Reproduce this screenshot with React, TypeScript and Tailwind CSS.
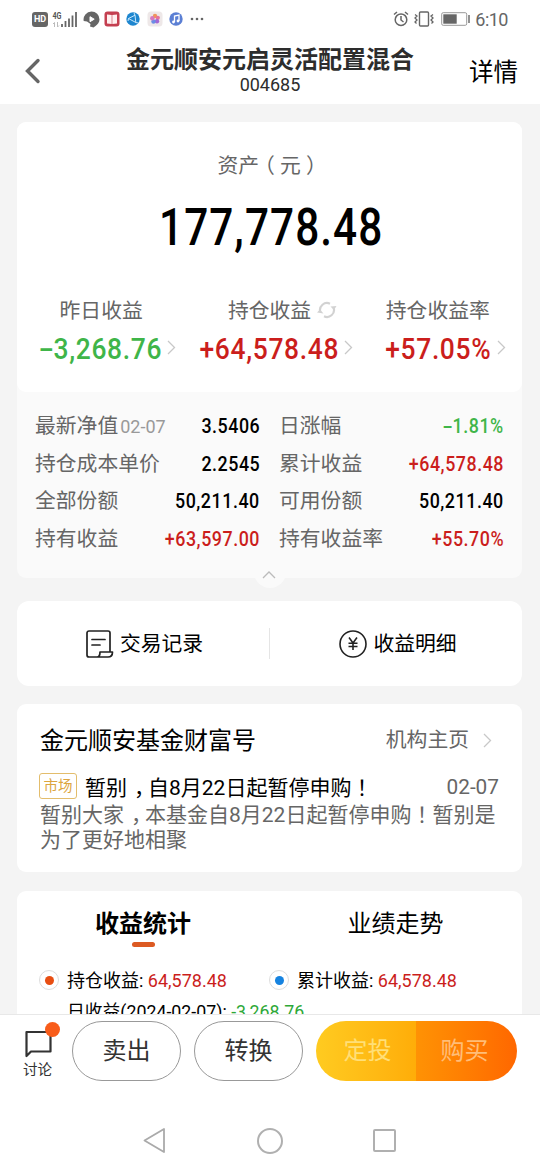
import React from 'react';

// Half-width punctuation centred in a full cell
const Comma: React.FC = () => <span className="ml-[0.33em] mr-[0.17em] [font-feature-settings:'halt']">，</span>;

const Paren: React.FC<{ children: React.ReactNode }> = ({ children }) => (
  <span className="mx-[0.25em] [font-feature-settings:'halt']">{children}</span>
);

const Bang: React.FC = () => <span className="font-['Noto_Sans_CJK_TC',sans-serif]">！</span>;

const Chevron: React.FC<{ className?: string }> = ({ className }) => (
  <svg className={`shrink-0 ${className ?? ''}`} width="9" height="15" viewBox="0 0 9 15" fill="none" stroke="#c8c8c8" strokeWidth="1.3">
    <path d="M1 1l6.500 6.500L1 14" />
  </svg>
);

const tones = {
  up: 'text-[#cb1e1c]',
  down: 'text-[#3fb549]',
  plain: 'text-black',
};

type Tone = keyof typeof tones;

const Amount: React.FC<{ value: string }> = ({ value }) =>
  value.startsWith('-') ? (
    <>
      <span className="inline-block w-[0.5em] text-center scale-x-[1.7]">-</span>
      {value.slice(1)}
    </>
  ) : (
    <>{value}</>
  );

const StatusBar: React.FC = () => (
  <div className="h-[38px] shrink-0 flex items-center justify-between px-8">
    <div className="flex items-center">
      <div className="w-4 h-[15px] rounded-[3px] bg-[#666] text-white text-[9px] font-bold flex items-center justify-center leading-none">HD</div>
      <svg className="ml-1" width="26" height="17" viewBox="0 0 26 17">
        <text x="0.5" y="7.5" fontSize="8.5" fontWeight="700" fill="#555" textLength="9" lengthAdjust="spacingAndGlyphs">4G</text>
        <path d="M2.500 16v-4.500m-1.500 1.500l1.500-1.500M5.500 11v5m1.500-1.500L5.500 16" stroke="#bbb" fill="none" />
        <path d="M10 16v-3M13.500 16v-6M17 16V7.500M20.500 16V4.500M24 16V1" stroke="#666" strokeWidth="1.800" />
      </svg>
      <svg className="ml-[5px]" width="17" height="17" viewBox="0 0 17 17">
        <path d="M8.500 0.500a8 8 0 0 1 8 8c0 3-2 5-4 6.500l-2 1.500-3.500-1 .5-2.500-3.500-2.500-3.300-.5a8 8 0 0 1 7.800-9.500z" fill="#666" />
        <path d="M7 5.700v5l4.200-2.500z" fill="#fff" stroke="#fff" strokeLinejoin="round" />
      </svg>
      <svg className="ml-1" width="16" height="16" viewBox="0 0 16 16">
        <rect x="0.500" y="0.500" width="15" height="15" rx="3" fill="#c43f50" />
        <path d="M3 3.500l4.700.5V13L3 12.500zM13 3.500L8.300 4v9l4.700-.5z" fill="#fff0f0" />
      </svg>
      <svg className="ml-[6px]" width="14" height="14" viewBox="0 0 14 14">
        <circle cx="7" cy="7" r="6.700" fill="#1e86cf" />
        <path d="M2.500 6.500L9 3.200l.8 7.300zM9 3.200L8 1M9.800 10.500L12.500 11M2.500 6.500L2 9" fill="none" stroke="#d9f0ff" strokeWidth="0.900" />
      </svg>
      <svg className="ml-[7px]" width="16" height="16" viewBox="0 0 16 16">
        <rect x="0.500" y="0.500" width="15" height="15" rx="3.500" fill="#eee8e8" />
        <circle cx="8" cy="5" r="2.200" fill="#f0945b" />
        <circle cx="10.800" cy="6.800" r="2.100" fill="#e6739a" />
        <circle cx="10" cy="10.300" r="2.200" fill="#a267d6" />
        <circle cx="6.500" cy="10.500" r="2.200" fill="#6b8ee6" />
        <circle cx="5.300" cy="7.200" r="2.200" fill="#d678c0" />
      </svg>
      <svg className="ml-[6px]" width="14" height="14" viewBox="0 0 14 14">
        <circle cx="7" cy="7" r="6.700" fill="#5b7fd4" />
        <path d="M5.500 10V4l4.500-1v6" fill="none" stroke="#fff" strokeWidth="1.300" />
        <circle cx="4.500" cy="10" r="1.400" fill="#fff" />
        <circle cx="9" cy="9" r="1.400" fill="#fff" />
      </svg>
      <svg className="ml-[7px]" width="14" height="4" viewBox="0 0 14 4" fill="#666">
        <circle cx="2" cy="2" r="1.300" />
        <circle cx="7" cy="2" r="1.300" />
        <circle cx="12" cy="2" r="1.300" />
      </svg>
    </div>
    <div className="flex items-center">
      <svg width="16" height="16" viewBox="0 0 16 16" fill="none" stroke="#666" strokeWidth="1.500">
        <circle cx="8" cy="8.700" r="5.800" />
        <path d="M8 5v4l2.500 2M1 3.500L4 1M15 3.500L12 1" />
      </svg>
      <svg className="ml-[5px]" width="20" height="16" viewBox="0 0 20 16" fill="none" stroke="#666" strokeWidth="1.400">
        <rect x="5.500" y="1" width="9" height="14" rx="1" />
        <path d="M1 3.500l2 1.500-2 2 2 2-2 2 1.500 1.500M19 3.500L17 5l2 2-2 2 2 2-1.500 1.500" strokeWidth="1.300" />
      </svg>
      <svg className="ml-[7px]" width="30" height="14" viewBox="0 0 30 14">
        <rect x="0.700" y="0.700" width="25" height="12.600" rx="1.500" fill="none" stroke="#999" />
        <rect x="2.300" y="2.300" width="13.400" height="9.400" fill="#666" />
        <path d="M28 3v8" stroke="#777" strokeWidth="1.600" />
      </svg>
      <span className="ml-1 pt-px text-[18px] leading-none tracking-[-0.5px] text-[#666]">6:10</span>
    </div>
  </div>
);

const TitleBar: React.FC = () => (
  <div className="h-[66px] shrink-0 grid grid-cols-[80px_1fr_80px] items-center">
    <svg className="ml-6" width="17" height="26" viewBox="0 0 17 26" fill="none" stroke="#666" strokeWidth="3.400" strokeLinecap="round">
      <path d="M14 2.500L3.500 13 14 23.500" />
    </svg>
    <div className="text-center text-[#2d2d2d] mt-px">
      <h1 className="text-[24px] leading-[27px] font-bold whitespace-nowrap -mx-2">金元顺安元启灵活配置混合</h1>
      <div className="text-[18px] leading-[22px]">004685</div>
    </div>
    <div className="text-[24.5px] leading-none text-black whitespace-nowrap ml-[9px] mt-[5px]">详情</div>
  </div>
);

const Summary: React.FC<{ label: string; value: string; tone: Tone; refresh?: boolean; chevron: string }> = ({ label, value, tone, refresh, chevron }) => (
  <div className="flex-1 flex flex-col items-center">
    <div className="flex items-center h-8 text-[20.8px] text-[#666] whitespace-nowrap">
      {label}
      {refresh && (
        <svg className="ml-[6px] -mr-[26px] -mt-[5px]" width="20" height="18" viewBox="0 0 20 18" fill="none" stroke="#d2d2d2" strokeWidth="2.200">
          <path d="M3.300 11A7 7 0 0 1 13 2.700M16.700 7A7 7 0 0 1 7 15.300" />
          <path d="M0 11.500L3 8.500l3.500 4zM13.500 5.500l6-.5-2.500 4z" fill="#d2d2d2" stroke="none" />
        </svg>
      )}
    </div>
    <div className="flex items-center h-[42px]">
      <span className={`text-[30px] leading-none font-medium whitespace-nowrap tracking-[0.025em] scale-x-[.88] ${tones[tone]}`}>
        <Amount value={value} />
      </span>
      <Chevron className={`-mt-1 ${chevron}`} />
    </div>
  </div>
);

const Detail: React.FC<{ label: string; date?: string; value: string; tone?: Tone }> = ({ label, date, value, tone = 'plain' }) => (
  <div className="h-[37.6px] flex items-center justify-between whitespace-nowrap">
    <span className="text-[20.8px] text-[#666]">
      {label}
      {date && <span className="text-[18px] text-[#999] ml-[2px]">{date}</span>}
    </span>
    <span className={`text-[21px] font-medium tracking-[0.03em] scale-x-[.85] origin-right ${tones[tone]}`}>
      <Amount value={value} />
    </span>
  </div>
);

const Legend: React.FC<{ label: string; dot: string }> = ({ label, dot }) => (
  <div className="flex items-center w-[230px] text-[18px] text-black whitespace-nowrap">
    <span className="w-5 h-5 rounded-full border border-[#ddd] flex items-center justify-center mr-2">
      <span className={`w-[9px] h-[9px] rounded-full ${dot}`} />
    </span>
    {label}:&nbsp;<span className="text-[#cb1e1c]">64,578.48</span>
  </div>
);

const BottomBar: React.FC = () => (
  <div className="h-[156px] shrink-0 border-t border-[#e8e8e8] bg-white">
    <div className="flex items-center h-[60px] mt-[6px] pl-[23px]">
      <div className="w-[38px] flex flex-col items-start text-[#333] relative">
        <svg className="ml-[2px] mt-[8px]" width="27" height="28" viewBox="0 0 27 28" fill="none" stroke="#333" strokeWidth="2.200" strokeLinejoin="round">
          <path d="M1.500 26V2h24v19.500H6z" />
        </svg>
        <span className="absolute left-[22px] top-0 w-[15px] h-[15px] rounded-full bg-[#f85c1a]" />
        <span className="text-[14.5px] leading-[18px] mt-[4px]">讨论</span>
      </div>
      <button className="ml-[11px] w-[109px] h-[60px] rounded-full border border-[#999] text-[24px] text-[#333]">卖出</button>
      <button className="ml-[13px] w-[109px] h-[60px] rounded-full border border-[#999] text-[24px] text-[#333]">转换</button>
      <div className="ml-[13px] flex w-[201px] h-[60px] rounded-full overflow-hidden text-[24px]">
        <button className="w-[100px] pl-[3px] bg-linear-to-r from-[#ffcb20] to-[#ffad08] text-[#ffdf78]">定投</button>
        <button className="w-[101px] pr-1 bg-linear-to-r from-[#ff9204] to-[#ff6700] text-[#ffbd78]">购买</button>
      </div>
    </div>
    <div className="flex items-center mt-[46px] pl-[143px]">
      <svg width="23" height="27" viewBox="0 0 23 27" fill="none" stroke="#aaa" strokeWidth="1.800" strokeLinejoin="round">
        <path d="M21 2v23L1.500 13.500z" />
      </svg>
      <span className="ml-[91px] w-[26px] h-[26px] rounded-full border-2 border-[#b0b0b0]" />
      <span className="ml-[90px] w-[23px] h-[23px] rounded-[2px] border-2 border-[#b0b0b0]" />
    </div>
  </div>
);

export default function App() {
  return (
    <div className="w-[540px] h-[1170px] overflow-hidden flex flex-col bg-white font-['Roboto','Noto_Sans_CJK_SC',sans-serif]">
      <StatusBar />
      <TitleBar />

      <main className="flex-1 min-h-0 overflow-hidden bg-[#f4f4f4] px-[17px] pr-[18px] pt-[18px]">
        <section className="rounded-[9px] bg-[#fafafa] h-[456px]">
          <div className="rounded-[9px] bg-white h-[270px] pt-[28px]">
            <div className="text-center text-[20.8px] leading-8 text-[#666]">
              资产<Paren>（</Paren>元<Paren>）</Paren>
            </div>
            <div className="text-center text-[51px] leading-[60px] mt-[16px] pl-1 font-medium text-black tracking-[0.025em] scale-x-[.83]">177,778.48</div>
            <div className="flex mt-[38px]">
              <Summary label="昨日收益" value="-3,268.76" tone="down" chevron="-ml-[3px] -mr-[6px]" />
              <Summary label="持仓收益" value="+64,578.48" tone="up" chevron="-ml-[5px] -mr-[4px]" refresh />
              <Summary label="持仓收益率" value="+57.05%" tone="up" chevron="-ml-px -mr-[8px]" />
            </div>
          </div>
          <div className="grid grid-cols-[225px_225px] gap-x-[19px] pl-[18px] pt-[16px]">
            <Detail label="最新净值" date="02-07" value="3.5406" />
            <Detail label="日涨幅" value="-1.81%" tone="down" />
            <Detail label="持仓成本单价" value="2.2545" />
            <Detail label="累计收益" value="+64,578.48" tone="up" />
            <Detail label="全部份额" value="50,211.40" />
            <Detail label="可用份额" value="50,211.40" />
            <Detail label="持有收益" value="+63,597.00" tone="up" />
            <Detail label="持有收益率" value="+55.70%" tone="up" />
          </div>
          <div className="mx-auto w-8 h-8 -mt-[2px] rounded-full bg-[#fafafa] flex justify-center pt-[15px] pr-[2px]">
            <svg width="14" height="8" viewBox="0 0 14 8" fill="none" stroke="#bbb" strokeWidth="1.300">
              <path d="M1 7l6-6 6 6" />
            </svg>
          </div>
        </section>

        <section className="mt-[23px] h-[85px] rounded-[12px] bg-white flex items-center text-[20.8px] text-black">
          <div className="w-[252px] flex items-center justify-center pl-[3px]">
            <svg className="mr-[6px]" width="28" height="28" viewBox="0 0 28 28" fill="none" stroke="#222" strokeWidth="1.700" strokeLinejoin="round" strokeLinecap="round">
              <path d="M24 21V3a2 2 0 0 0-2-2H3a2 2 0 0 0-2 2v22a2 2 0 0 0 2 2h19c3 0 4.500-2 4.500-5H14c0 3-.5 5-3 5" />
              <path d="M6 9.500h13M6 15h8" />
            </svg>
            <span className="pt-[2px]">交易记录</span>
          </div>
          <div className="w-px h-[31px] bg-[#e5e5e5]" />
          <div className="flex-1 flex items-center justify-center pl-1">
            <svg className="mr-[6px]" width="28" height="28" viewBox="0 0 28 28" fill="none" stroke="#222" strokeWidth="1.600">
              <circle cx="14" cy="14" r="13" />
              <path d="M10 7.500l4 5.500 4-5.500M14 13V20M9.500 13.200h9M9.500 16.500h9" />
            </svg>
            <span className="pt-[2px]">收益明细</span>
          </div>
        </section>

        <section className="mt-[18px] h-[168px] rounded-[9px] bg-white pl-[23px] pr-[23px] pt-[19px]">
          <div className="flex items-center h-9">
            <h2 className="text-[24px] text-black">金元顺安基金财富号</h2>
            <span className="ml-auto text-[20.8px] text-[#666]">机构主页</span>
            <Chevron className="ml-[14px] mr-[7px] -mt-[2px]" />
          </div>
          <div className="flex items-center h-[30px] mt-[12px] text-[21px] whitespace-nowrap">
            <span className="w-[38px] h-[26px] -ml-px pt-[2px] rounded-[3px] border border-[#e3bd6c] text-[14.5px] text-[#dca540] flex items-center justify-center">市场</span>
            <span className="ml-[8px] mt-[3px] text-black">
              暂别<Comma />自8月22日起暂停申购<Bang />
            </span>
            <span className="ml-auto mt-[3px] text-[20.8px] text-[#666]">02-07</span>
          </div>
          <p className="text-[21px] leading-[25px] text-[#666] whitespace-nowrap">
            暂别大家<Comma />本基金自8月22日起暂停申购<Bang />暂别是
            <br />
            为了更好地相聚
          </p>
        </section>

        <section className="mt-[19px] h-[123px] rounded-t-[9px] overflow-hidden bg-white pt-[15px]">
          <div className="flex text-[24px] leading-9 text-black text-center">
            <div className="w-[252px] flex flex-col items-center">
              <span className="font-bold">收益统计</span>
              <span className="w-[23px] h-[5px] rounded-full bg-[#dc5a22]" />
            </div>
            <div className="w-[252px] pl-px">业绩走势</div>
          </div>
          <div className="flex h-[30px] mt-[18px] pl-[22px]">
            <Legend label="持仓收益" dot="bg-[#e84e12]" />
            <Legend label="累计收益" dot="bg-[#1683e0]" />
          </div>
          <div className="pl-[50px] pt-[2px] text-[17.8px] leading-[30px] text-black">
            日收益(2024-02-07): <span className="text-[#2ea838]">-3,268.76</span>
          </div>
        </section>
      </main>

      <BottomBar />
    </div>
  );
}
